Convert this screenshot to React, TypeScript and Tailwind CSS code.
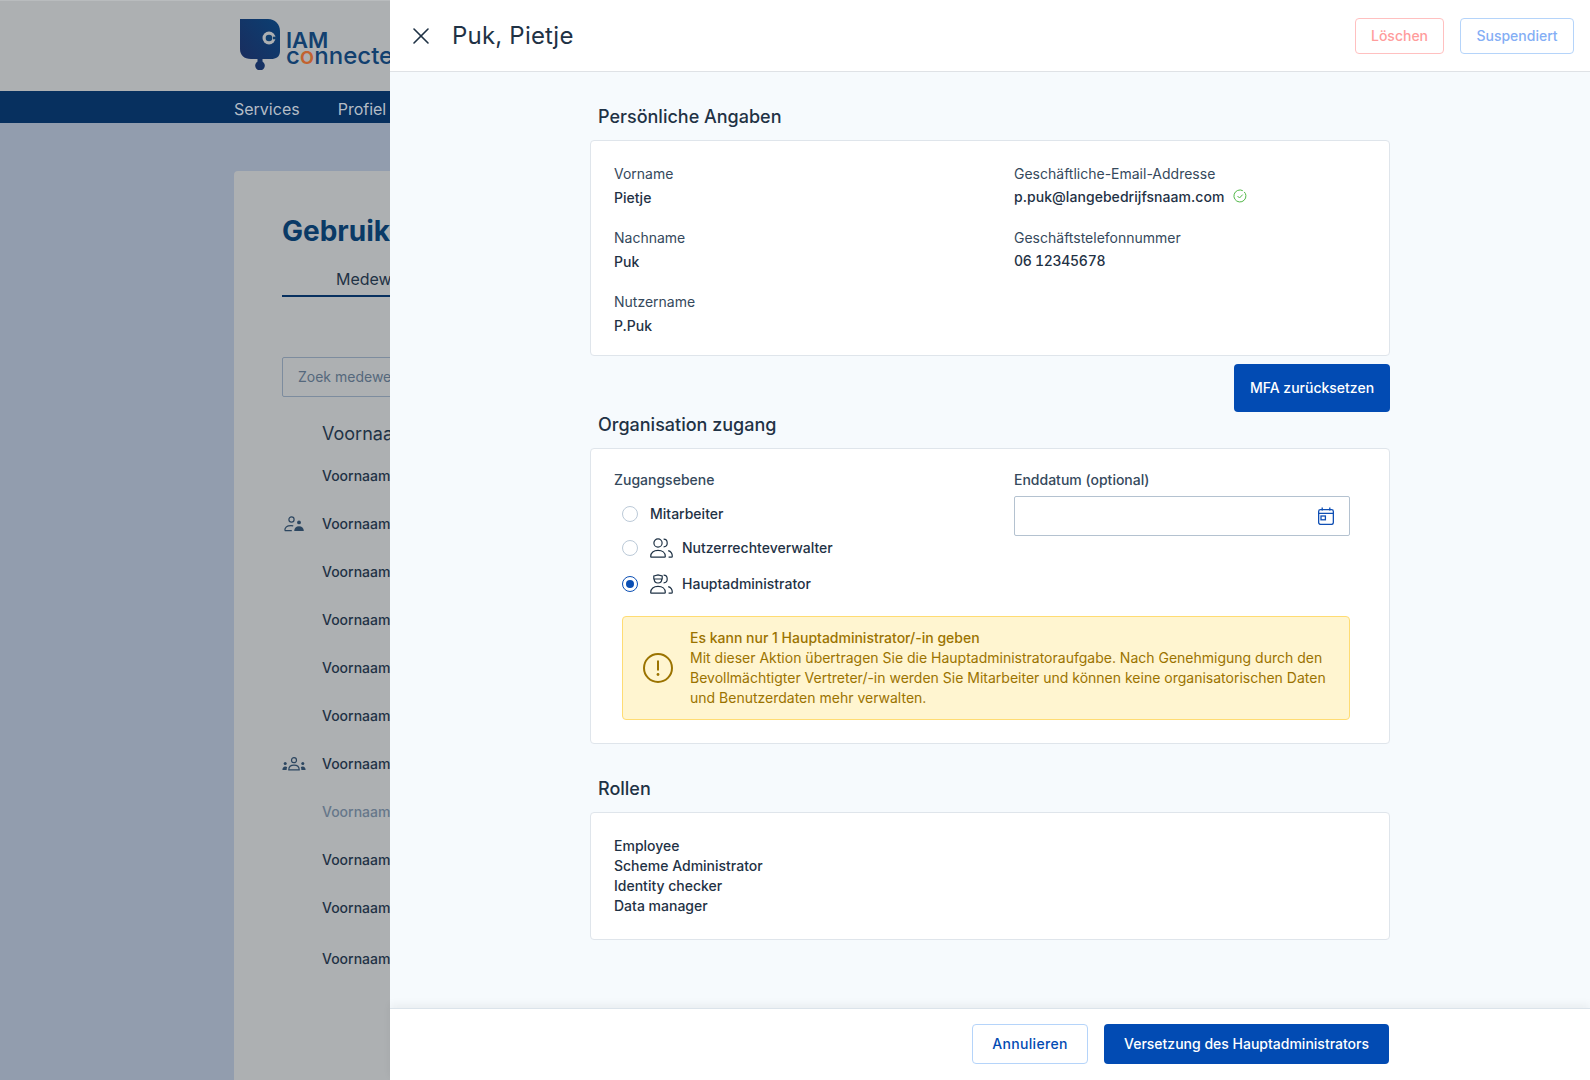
import { X } from "lucide-react";

const FONT = "[font-family:Inter,'Noto_Sans',sans-serif]";

function UserTile() {
  return (
    <svg viewBox="0 0 20 16" className="ml-[2px] h-4 w-5 text-[#2c4660]" fill="none" stroke="currentColor" strokeWidth="1.2">
      <circle cx="7.5" cy="3.5" r="2.6" />
      <path d="M0.8 14.6c0-3.4 2.6-5 6.2-5 .8 0 1.6.1 2.2.3M0.8 14.6h7" />
      <circle cx="15" cy="6.4" r="1.9" fill="currentColor" stroke="none" />
      <path d="M10.2 15c0-3 2-4.8 4.8-4.8s4.8 1.8 4.8 4.8z" fill="currentColor" stroke="none" />
    </svg>
  );
}

function GroupTile() {
  return (
    <svg viewBox="0 0 24 14" className="h-[14px] w-6 text-[#2c4660]" fill="none" stroke="currentColor" strokeWidth="1.2">
      <circle cx="12" cy="3.2" r="2.5" />
      <path d="M6.8 12.8c0-3 2.2-4.6 5.2-4.6s5.2 1.6 5.2 4.6z" />
      <circle cx="3.2" cy="6.4" r="1.5" fill="currentColor" stroke="none" />
      <path d="M.4 13c0-2.4 1.2-3.6 2.8-3.6 1 0 1.6.3 2 .8-.4.8-.6 1.7-.6 2.8z" fill="currentColor" stroke="none" />
      <circle cx="20.8" cy="6.4" r="1.5" fill="currentColor" stroke="none" />
      <path d="M23.6 13c0-2.4-1.2-3.6-2.8-3.6-1 0-1.6.3-2 .8.4.8.6 1.7.6 2.8z" fill="currentColor" stroke="none" />
    </svg>
  );
}

function PeopleIcon({ cap }: { cap?: boolean }) {
  return (
    <svg viewBox="0 0 23 20" className="h-5 w-[23px] text-[#1f3245]" fill="none" stroke="currentColor" strokeWidth="1.2">
      {cap ? (
        <path d="M3.800 2l4.200-1.200L12.200 2v3H3.800zM4.200 5c0 2.600 1.600 4 3.800 4s3.800-1.400 3.800-4" />
      ) : (
        <circle cx="8" cy="5" r="4.100" />
      )}
      <path d="M.7 18.400c0-3.800 3-6 7.300-6s7.300 2.200 7.300 6c0 .5-.3.8-.8.8H1.500c-.5 0-.8-.3-.8-.8z" />
      <path d="M13.600 1.200c2.200 0 3.600 1.700 3.600 3.800s-1.400 3.800-3.600 3.800" />
      <path d="M18.200 12.600c2.500.7 4.100 2.900 4.100 5.700 0 .6-.3.900-.9.900h-2.800" />
    </svg>
  );
}

function CalendarIcon() {
  return (
    <svg viewBox="0 0 16 18" className="h-[18px] w-4 text-[#0f4fb4]" fill="none" stroke="currentColor" strokeWidth="1.300">
      <rect x="0.650" y="2.600" width="14.700" height="14.800" rx="1.800" />
      <path d="M0.650 6.400h14.700M4.200 0.400v3M11.800 0.400v3" />
      <rect x="3" y="9" width="4.400" height="3.800" />
    </svg>
  );
}

function CheckBadge() {
  return (
    <svg viewBox="0 0 14 14" className="-mt-[2px] h-[14px] w-[14px] text-[#52b848]" fill="none" stroke="currentColor" strokeWidth="1">
      <path d="M12.900 6.400A6 6 0 1 1 9.800 1.700" />
      <path d="M4.500 7l2 2 3.200-3.400" />
      <path d="M11.200 2.900a6 6 0 0 1 1.700 3.500" />
    </svg>
  );
}

function Logo() {
  return (
    <div className="flex items-start">
      <svg viewBox="0 0 40 51" className="h-[51px] w-10 shrink-0">
        <defs>
          <linearGradient id="logoFill" x1="0" y1="1" x2="1" y2="0">
            <stop offset="0" stopColor="#1b2b5c" />
            <stop offset="1" stopColor="#0b3f72" />
          </linearGradient>
        </defs>
        <path d="M0 0H28C35 0 40 5 40 12V32C40 38 36 40 31 40H22.500V42.500A4.800 4.800 0 1 1 17.500 42.500V40H11C4 40 0 36 0 30Z" fill="url(#logoFill)" />
        <circle cx="29" cy="19" r="6.500" fill="#adb0b2" />
        <circle cx="29" cy="19" r="3.300" fill="#12406f" />
        <rect x="33" y="17.700" width="4" height="2.600" fill="#12406f" />
      </svg>
      <div className="mt-[12px] ml-[6px] flex flex-col text-[#12406f]">
        <span className="text-[22px] leading-[18px] font-semibold">IAM</span>
        <span className="text-[24px] leading-[14px] font-medium whitespace-nowrap">
          c<span className="text-[#c2622f]">o</span>nnected
        </span>
      </div>
    </div>
  );
}

function BackPage() {
  const rows = [
    { y: "h-12" },
    { y: "h-12", icon: <UserTile /> },
    { y: "h-12" },
    { y: "h-12" },
    { y: "h-12" },
    { y: "h-12" },
    { y: "h-12", icon: <GroupTile /> },
    { y: "h-12", muted: true },
    { y: "h-12" },
    { y: "h-12" },
    { y: "h-[53px]" },
  ];
  return (
    <div className="h-[1080px] bg-[#929dae]">
      <div className="h-[91px] border-t border-[#b9bcbe] bg-[#adb0b2] pt-[18px] pl-[240px]">
        <Logo />
      </div>
      <div className="flex h-8 items-center gap-[38px] bg-[#07305f] pt-1 pl-[234px] text-base text-[#b4bcc6]">
        <span>Services</span>
        <span>Profiel</span>
      </div>
      <div className="mt-12 ml-[234px] h-[909px] rounded-t bg-[#adb0b2] pl-12">
        <h1 className="pt-[40px] text-[28px] leading-10 font-bold whitespace-nowrap text-[#0a3a66]">Gebruikers</h1>
        <div className="mt-4 w-[160px] border-b-2 border-[#07305f] pb-1 pl-[54px] text-base leading-6 text-[#1f3245]">Medewerkers</div>
        <div className="mt-[60px] flex h-10 w-[400px] items-center rounded-[2px] border border-[#7d8c9e] pl-[15px] text-sm text-[#55687c]">Zoek medewerker</div>
        <div className="mt-[23px] pl-10 text-lg leading-7 text-[#1f3245]">Voornaam</div>
        <div className="mt-1 flex flex-col">
          {rows.map((row, i) => (
            <div key={i} className={`flex items-center ${row.y}`}>
              <span className="flex w-10 items-center">{row.icon}</span>
              <span className={`text-sm font-medium ${row.muted ? "text-[#66778a]" : "text-[#1f3245]"}`}>Voornaam Achternaam</span>
            </div>
          ))}
        </div>
      </div>
    </div>
  );
}

function Field({ label, value, tight, extra, valueClass }: { label: string; value: string; tight?: boolean; extra?: React.ReactNode; valueClass?: string }) {
  return (
    <div className={tight ? "mb-[21px]" : "mb-5"}>
      <div className="text-sm leading-5 text-[#35495c]">{label}</div>
      <div className={`flex items-center gap-[9px] text-sm leading-5 font-medium text-[#1f3245] ${tight ? "mt-[3px]" : "mt-1"} ${valueClass ?? ""}`}>
        {value}
        {extra}
      </div>
    </div>
  );
}

function Radio({ checked }: { checked?: boolean }) {
  return (
    <span className={`flex h-4 w-4 items-center justify-center rounded-full border bg-white ${checked ? "border-[#0b4fb4]" : "border-[#bccad8]"}`}>
      {checked && <span className="h-2 w-2 rounded-full bg-[#0b4fb4]" />}
    </span>
  );
}

function Card({ children, className }: { children: React.ReactNode; className: string }) {
  return <div className={`rounded border border-[#dfe5eb] bg-white ${className}`}>{children}</div>;
}

export default function App() {
  return (
    <div className={`relative h-[1080px] overflow-hidden ${FONT}`}>
      <BackPage />
      <div className="absolute top-0 right-0 flex h-[1080px] w-[1200px] flex-col bg-[#f6fafd]">
        <header className="flex h-[72px] items-center border-b border-[#dfe2e6] bg-white pr-4 pl-[17px]">
          <X className="h-[28px] w-[28px] text-[#1f3245]" strokeWidth={1.4} />
          <h2 className="ml-[17px] text-2xl tracking-[0.2px] text-[#1f3245]">Puk, Pietje</h2>
          <div className="ml-auto flex gap-4">
            <button className="h-9 w-[89px] rounded border border-[#ffc0c0] text-sm font-medium text-[#ff9c9c]">Löschen</button>
            <button className="h-9 w-[114px] rounded border border-[#b5d4fa] text-sm font-medium text-[#84aef5]">Suspendiert</button>
          </div>
        </header>

        <main className="ml-[200px] w-[800px] flex-1 pt-[31px]">
          <h3 className="pl-2 text-lg leading-7 font-medium text-[#1f3245]">Persönliche Angaben</h3>
          <Card className="mt-[9px] grid h-[216px] grid-cols-[400px_1fr] pt-[23px] pl-[23px]">
            <div>
              <Field label="Vorname" value="Pietje" />
              <Field label="Nachname" value="Puk" />
              <Field label="Nutzername" value="P.Puk" />
            </div>
            <div>
              <Field label="Geschäftliche-Email-Addresse" value="p.puk@langebedrijfsnaam.com" tight extra={<CheckBadge />} valueClass="tracking-[0.05px]" />
              <Field label="Geschäftstelefonnummer" value="06 12345678" tight valueClass="tracking-[-0.3px] tabular-nums" />
            </div>
          </Card>
          <div className="mt-2 flex justify-end">
            <button className="h-12 w-[156px] rounded bg-[#024bb3] text-sm font-medium text-white">MFA zurücksetzen</button>
          </div>

          <h3 className="-mt-px pl-2 text-lg leading-7 font-medium text-[#1f3245]">Organisation zugang</h3>
          <Card className="mt-[9px] h-[296px] pt-[21px] pl-[23px]">
            <div className="grid grid-cols-[400px_336px]">
              <div>
                <div className="text-sm leading-5 font-medium text-[#35495c]">Zugangsebene</div>
                <div className="mt-3 ml-2 flex h-6 items-center gap-3 text-sm font-medium text-[#1f3245]">
                  <Radio />
                  Mitarbeiter
                </div>
                <div className="mt-[10px] ml-2 flex h-6 items-center gap-3 text-sm font-medium text-[#1f3245]">
                  <Radio />
                  <span className="flex items-center gap-[9px]">
                    <PeopleIcon />
                    Nutzerrechteverwalter
                  </span>
                </div>
                <div className="mt-3 ml-2 flex h-6 items-center gap-3 text-sm font-medium text-[#1f3245]">
                  <Radio checked />
                  <span className="flex items-center gap-[9px]">
                    <PeopleIcon cap />
                    Hauptadministrator
                  </span>
                </div>
              </div>
              <div>
                <div className="text-sm leading-5 font-medium text-[#35495c]">Enddatum (optional)</div>
                <div className="mt-[6px] flex h-10 items-center justify-end rounded-[2px] border border-[#b4c2d0] bg-white pr-[15px]">
                  <CalendarIcon />
                </div>
              </div>
            </div>
            <div className="mt-5 ml-2 flex h-[104px] w-[728px] items-center gap-[17px] rounded border border-[#ffdc73] bg-[#fff5d0] pl-5 text-[#9b7300]">
              <svg viewBox="0 0 30 30" className="h-[30px] w-[30px] shrink-0" fill="none" stroke="currentColor" strokeWidth="2">
                <circle cx="15" cy="15" r="14" />
                <path d="M15 7.500v10" />
                <circle cx="15" cy="21.500" r="1.400" fill="currentColor" stroke="none" />
              </svg>
              <div className="text-sm leading-5">
                <div className="font-medium">Es kann nur 1 Hauptadministrator/-in geben</div>
                <div className="w-[645px]">
                  Mit dieser Aktion übertragen Sie die Hauptadministratoraufgabe. Nach Genehmigung durch den Bevollmächtigter Vertreter/-in werden Sie Mitarbeiter und können keine organisatorischen Daten und Benutzerdaten mehr verwalten.
                </div>
              </div>
            </div>
          </Card>

          <h3 className="mt-[31px] pl-2 text-lg leading-7 font-medium text-[#1f3245]">Rollen</h3>
          <Card className="mt-[9px] h-[128px] pt-[23px] pl-[23px] text-sm leading-5 font-medium text-[#1f3245]">
            <div>Employee</div>
            <div>Scheme Administrator</div>
            <div>Identity checker</div>
            <div>Data manager</div>
          </Card>
        </main>

        <footer className="flex h-[72px] items-center justify-end gap-4 border-t border-[#dbe3ea] bg-white pr-[201px] pb-px shadow-[0_-4px_8px_rgba(0,0,0,0.05)]">
          <button className="h-10 w-[116px] rounded border border-[#b5d4fa] bg-white text-sm font-medium tracking-[0.3px] text-[#024bb3]">Annulieren</button>
          <button className="h-10 w-[285px] rounded bg-[#024bb3] text-sm font-medium text-white">Versetzung des Hauptadministrators</button>
        </footer>
      </div>
    </div>
  );
}
